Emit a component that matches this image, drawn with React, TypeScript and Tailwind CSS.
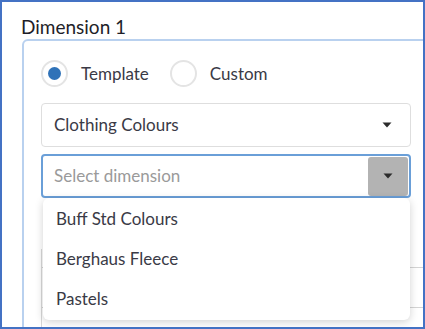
import { useState } from 'react';

const font = { fontFamily: 'Lato, "Open Sans", sans-serif' };

function Caret() {
  return (
    <svg width="10" height="6" viewBox="0 0 10 6" className="block">
      <path d="M0.5 0.5 L9.5 0.5 L5 5.5 Z" fill="#2b2b2b" />
    </svg>
  );
}

function Radio({ label, checked }: { label: string; checked?: boolean }) {
  return (
    <label className="flex items-center gap-[13px]">
      <span className="w-[27px] h-[27px] rounded-full border-2 border-[#e4e4e4] bg-white flex items-center justify-center">
        {checked && <span className="w-[13px] h-[13px] rounded-full bg-[#2f72b8]" />}
      </span>
      <span className="text-[17px] text-[#3a3a46]">{label}</span>
    </label>
  );
}

const options = ['Buff Std Colours', 'Berghaus Fleece', 'Pastels'];

export default function App() {
  const [open] = useState(true);

  return (
    <div
      className="relative w-[425px] h-[329px] overflow-hidden bg-white border-2 border-[#4472c4]"
      style={font}
    >
      <div className="pl-[19px] pt-[14px] text-[19px] leading-[22px] text-[#1e1e28]">Dimension 1</div>

      <div className="ml-[20px] mt-[1px] w-[440px] h-[300px] border-2 border-[#b9d1ef] rounded-tl-[6px] pl-[17px] pt-[19px]">
        <div className="flex items-center gap-[21px]">
          <Radio label="Template" checked />
          <Radio label="Custom" />
        </div>

        <div className="relative w-[370px] mt-[16px]">
          <div className="h-[44px] border border-[#dedede] rounded-[4px] flex items-center justify-between pl-[12px] pr-[18px]">
            <span className="text-[17px] text-[#3a3a46]">Clothing Colours</span>
            <Caret />
          </div>

          <div className="mt-[7px] h-[44px] border-2 border-[#6a9fd8] rounded-[4px] flex items-center justify-between pl-[11px] pr-[1px]">
            <span className="text-[17px] text-[#9a9a9a]">Select dimension</span>
            <span className="w-[40px] h-[39px] bg-[#b3b3b3] rounded-[3px] flex items-center justify-center">
              <Caret />
            </span>
          </div>

          {/* content partly hidden behind the open list */}
          <div className="mt-[51px] w-[400px] h-[80px] border-l border-[#d8d8d8] pt-[18px]">
            <div className="border-t border-[#d4d4d4]" />
            <div className="mt-[39px] border-t border-[#d4d4d4]" />
          </div>

          {open && (
            <ul className="absolute left-[2px] top-[95px] w-[367px] bg-white rounded-[6px] shadow-[0_2px_8px_rgba(0,0,0,0.18)] py-[1px]">
              {options.map((o) => (
                <li key={o} className="h-[40px] flex items-center pl-[13px] text-[17px] text-[#3a3a46]">
                  {o}
                </li>
              ))}
            </ul>
          )}
        </div>
      </div>
    </div>
  );
}
